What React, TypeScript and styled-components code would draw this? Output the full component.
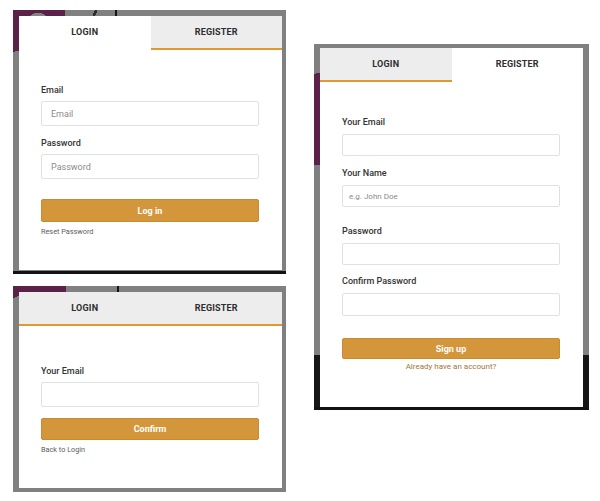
import React from 'react'
import styled, { createGlobalStyle } from 'styled-components'

type Pad = [number, number, number, number]

const GlobalStyle = createGlobalStyle`
  html, body {
    margin: 0;
    background: #ffffff;
  }
  body {
    font-family: Roboto, 'Liberation Sans', Arial, sans-serif;
  }
  * {
    box-sizing: border-box;
  }
`

// backdrop fragments of the site behind each modal, seen in the overlay frame
const shotLogin = [
  'linear-gradient(#141414, #141414) 102px 0 / 2px 6px no-repeat',
  'linear-gradient(115deg, transparent 35%, #2b2b2b 35%, #2b2b2b 65%, transparent 65%) 79px 0 / 6px 6px no-repeat',
  'radial-gradient(circle at 25px 14px, #858585 0 11px, transparent 11.5px) 0 0 / 60px 6px no-repeat',
  'linear-gradient(#5b2149, #5b2149) 0 0 / 52px 6px no-repeat',
  'linear-gradient(170deg, #5b2149 82%, transparent 82%) 0 0 / 6px 50px no-repeat',
  '#808080',
].join(', ')

const shotReset = [
  'linear-gradient(#141414, #141414) 104px 0 / 2px 6px no-repeat',
  'linear-gradient(#5b2149, #5b2149) 0 0 / 53px 6px no-repeat',
  'linear-gradient(160deg, #5b2149 50%, transparent 50%) 0 0 / 6px 22px no-repeat',
  '#808080',
].join(', ')

const shotRegister = [
  'linear-gradient(#161616, #161616) 0 311px / 100% 60px no-repeat',
  'linear-gradient(170deg, transparent 4%, #5b2149 4%) 0 26px / 6px 95px no-repeat',
  '#808080',
].join(', ')

const Page = styled.div`
  display: flex;
  align-items: flex-start;
  width: 600px;
  height: 501px;
  padding: 10px 0 0 13px;
`

const LeftColumn = styled.div`
  display: flex;
  flex-direction: column;
  gap: 12px;
  width: 273px;
`

const RightColumn = styled.div`
  width: 275px;
  margin: 34px 0 0 28px;
`

const Shot = styled.div<{ $pad: Pad; $bg: string; $edge?: boolean }>`
  padding: ${p => p.$pad.map(v => v + 'px').join(' ')};
  background: ${p => p.$bg};
  border-bottom: ${p => (p.$edge ? '3px solid #121212' : 'none')};
`

const Card = styled.div<{ $h: number }>`
  display: flex;
  flex-direction: column;
  height: ${p => p.$h}px;
  background: #ffffff;
`

const TabRow = styled.div`
  display: flex;
`

const Tab = styled.div<{ $active?: boolean }>`
  flex: 1;
  display: flex;
  align-items: center;
  justify-content: center;
  height: 34px;
  background: ${p => (p.$active ? '#ffffff' : '#ededed')};
  border-bottom: 2px solid ${p => (p.$active ? 'transparent' : '#e1982f')};
  color: #2e2e2e;
  font-size: 9px;
  font-weight: 700;
  letter-spacing: 0.2px;
  text-transform: uppercase;
`

const Form = styled.form<{ $top: number; $gap: number }>`
  display: flex;
  flex-direction: column;
  padding: ${p => p.$top}px 23px 0 22px;

  & > label {
    gap: ${p => p.$gap}px;
  }
`

const Field = styled.label<{ $mt?: number }>`
  display: flex;
  flex-direction: column;
  margin-top: ${p => p.$mt ?? 0}px;
`

const LabelText = styled.span`
  color: #333333;
  font-size: 9px;
  font-weight: 500;
  line-height: 12px;
`

const Input = styled.input<{ $h: number; $small?: boolean }>`
  width: 100%;
  height: ${p => p.$h}px;
  padding: 0 ${p => (p.$small ? 6 : 9)}px;
  border: 1px solid #dee1e6;
  border-radius: 2px;
  background: #ffffff;
  color: #333333;
  font-family: Roboto, 'Liberation Sans', Arial, sans-serif;
  font-size: ${p => (p.$small ? 8 : 9)}px;
  outline: none;

  &::placeholder {
    color: #8b8b8b;
  }
`

const Submit = styled.button<{ $mt: number; $h: number }>`
  height: ${p => p.$h}px;
  margin-top: ${p => p.$mt}px;
  border: 1px solid #c98b2f;
  border-radius: 2px;
  background: #d3963a;
  color: #ffffff;
  font-family: Roboto, 'Liberation Sans', Arial, sans-serif;
  font-size: 9px;
  font-weight: 700;
  cursor: pointer;
`

const Hint = styled.span<{ $mt: number; $accent?: boolean }>`
  display: block;
  margin-top: ${p => p.$mt}px;
  color: ${p => (p.$accent ? '#a0773a' : '#5c5c5c')};
  font-size: ${p => (p.$accent ? 8 : 7.3)}px;
  line-height: 10px;
  text-align: ${p => (p.$accent ? 'center' : 'left')};
  cursor: pointer;
`

const LoginModal = () => (
  <Shot $pad={[6, 4, 1, 6]} $bg={shotLogin} $edge>
    <Card $h={254}>
      <TabRow>
        <Tab $active>Login</Tab>
        <Tab>Register</Tab>
      </TabRow>
      <Form $top={34} $gap={5}>
        <Field>
          <LabelText>Email</LabelText>
          <Input $h={25} type="email" placeholder="Email" />
        </Field>
        <Field $mt={11}>
          <LabelText>Password</LabelText>
          <Input $h={25} type="password" placeholder="Password" />
        </Field>
        <Submit type="button" $mt={20} $h={23}>
          Log in
        </Submit>
        <Hint $mt={5}>Reset Password</Hint>
      </Form>
    </Card>
  </Shot>
)

const ResetModal = () => (
  <Shot $pad={[6, 4, 4, 6]} $bg={shotReset}>
    <Card $h={196}>
      <TabRow>
        <Tab>Login</Tab>
        <Tab>Register</Tab>
      </TabRow>
      <Form $top={39} $gap={5}>
        <Field>
          <LabelText>Your Email</LabelText>
          <Input $h={25} type="email" />
        </Field>
        <Submit type="button" $mt={11} $h={22}>
          Confirm
        </Submit>
        <Hint $mt={5}>Back to Login</Hint>
      </Form>
    </Card>
  </Shot>
)

const RegisterModal = () => (
  <Shot $pad={[4, 6, 0, 6]} $bg={shotRegister} $edge>
    <Card $h={359}>
      <TabRow>
        <Tab>Login</Tab>
        <Tab $active>Register</Tab>
      </TabRow>
      <Form $top={34} $gap={6}>
        <Field>
          <LabelText>Your Email</LabelText>
          <Input $h={22} type="email" />
        </Field>
        <Field $mt={11}>
          <LabelText>Your Name</LabelText>
          <Input $h={22} $small type="text" placeholder="e.g. John Doe" />
        </Field>
        <Field $mt={18}>
          <LabelText>Password</LabelText>
          <Input $h={22} type="password" />
        </Field>
        <Field $mt={10}>
          <LabelText>Confirm Password</LabelText>
          <Input $h={23} type="password" />
        </Field>
        <Submit type="button" $mt={22} $h={21}>
          Sign up
        </Submit>
        <Hint $mt={3} $accent>
          Already have an account?
        </Hint>
      </Form>
    </Card>
  </Shot>
)

const App = () => (
  <>
    <GlobalStyle />
    <Page>
      <LeftColumn>
        <LoginModal />
        <ResetModal />
      </LeftColumn>
      <RightColumn>
        <RegisterModal />
      </RightColumn>
    </Page>
  </>
)

export default App
